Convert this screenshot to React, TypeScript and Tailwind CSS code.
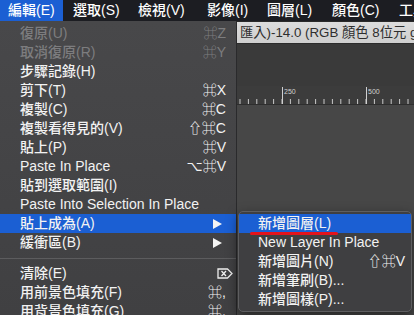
import React from 'react'

const FONT = "font-['Liberation_Sans','Noto_Sans_CJK_TC','DejaVu_Sans',sans-serif]";

interface Item {
  label: string;
  sc?: string;
  disabled?: boolean;
  arrow?: boolean;
  active?: boolean;
  del?: boolean;
}

const mainItems: (Item | 'sep')[] = [
  { label: '復原(U)', sc: '⌘Z', disabled: true },
  { label: '取消復原(R)', sc: '⌘Y', disabled: true },
  { label: '步驟記錄(H)' },
  { label: '剪下(T)', sc: '⌘X' },
  { label: '複製(C)', sc: '⌘C' },
  { label: '複製看得見的(V)', sc: '⇧⌘C' },
  { label: '貼上(P)', sc: '⌘V' },
  { label: 'Paste In Place', sc: '⌥⌘V' },
  { label: '貼到選取範圍(I)' },
  { label: 'Paste Into Selection In Place' },
  { label: '貼上成為(A)', arrow: true, active: true },
  { label: '緩衝區(B)', arrow: true },
  'sep',
  { label: '清除(E)', del: true },
  { label: '用前景色填充(F)', sc: '⌘,' },
  { label: '用背景色填充(G)', sc: '⌘.' },
];

const subItems: Item[] = [
  { label: '新增圖層(L)', active: true },
  { label: 'New Layer In Place' },
  { label: '新增圖片(N)', sc: '⇧⌘V' },
  { label: '新增筆刷(B)...' },
  { label: '新增圖樣(P)...' },
];

// menu bar titles with their slot widths
const menuBar = [
  { t: '編輯(E)', w: 'w-[63px] pl-2 bg-[#1b5fd3]' },
  { t: '選取(S)', w: 'w-[65px] pl-[10px]' },
  { t: '檢視(V)', w: 'w-[69px] pl-[10px]' },
  { t: '影像(I)', w: 'w-[60px] pl-[10px]' },
  { t: '圖層(L)', w: 'w-[65px] pl-[10px]' },
  { t: '顏色(C)', w: 'w-[67px] pl-[10px]' },
  { t: '工具(T)', w: 'w-[60px] pl-[10px]' },
];

const Arrow = () => (
  <svg width="9" height="10" viewBox="0 0 9 10">
    <path d="M0 0 L9 5 L0 10 Z" fill="#f4f4f4" />
  </svg>
);

const DeleteKey = () => (
  <svg width="16" height="11" viewBox="0 0 16 11" fill="none" stroke="#eeeeee" strokeWidth="1.3">
    <path d="M1 1 H10.5 L15 5.5 L10.5 10 H1 Z" />
    <path d="M4.5 3 L9 8 M9 3 L4.5 8" />
  </svg>
);

const Ruler = () => {
  const ticks: number[] = [];
  for (let x = 45 - 8.4 * 5; x < 180; x += 8.4) ticks.push(x);
  return (
    <svg width="177" height="19" viewBox="0 0 177 19" className="block">
      <rect width="177" height="19" fill="#3c3c3c" />
      {ticks.map((x, i) => (
        <line key={i} x1={x} x2={x} y1="13" y2="18" stroke="#c9c9c9" strokeWidth="1" />
      ))}
      <line x1="45.5" x2="45.5" y1="1" y2="18" stroke="#d0d0d0" strokeWidth="1" />
      <line x1="129.5" x2="129.5" y1="1" y2="18" stroke="#d0d0d0" strokeWidth="1" />
      <text x="47" y="8" fontSize="7" fill="#d0d0d0" fontFamily="Liberation Sans">250</text>
      <text x="131" y="8" fontSize="7" fill="#d0d0d0" fontFamily="Liberation Sans">500</text>
      <line x1="0" x2="177" y1="18.5" y2="18.5" stroke="#2e2e2e" />
    </svg>
  );
};

export default function App() {
  return (
    <div className={`relative w-[414px] h-[315px] overflow-hidden bg-[#474747] ${FONT}`}>
      {/* menu bar */}
      <div className="flex h-[21px] bg-[#1c1d22] text-[14px] font-medium text-white">
        {menuBar.map((m) => (
          <div key={m.t} className={`flex shrink-0 items-center whitespace-nowrap ${m.w}`}>
            {m.t}
          </div>
        ))}
      </div>

      <div className="flex h-[294px]">
        {/* main edit menu */}
        <div className="w-[237px] shrink-0 border-r border-[#2a2a2c] bg-gradient-to-b from-[#48484a] to-[#404042] pt-[3px] text-[14px] font-medium text-[#f2f2f2]">
          {mainItems.map((it, i) =>
            it === 'sep' ? (
              <div key={i} className="flex h-[12px] items-center">
                <div className="h-px w-full bg-[#5c5c5e]" />
              </div>
            ) : (
              <div
                key={i}
                className={`flex h-[19px] items-center justify-between pl-5 pr-[10px] whitespace-nowrap ${
                  it.active ? 'bg-[#1b5fd3]' : ''
                } ${it.disabled ? 'text-[#7d7d7f]' : ''}`}
              >
                <span>{it.label}</span>
                {it.sc && <span className="text-[14px]">{it.sc}</span>}
                {it.arrow && <span className="pr-[4px]"><Arrow /></span>}
                {it.del && <span className="-mr-[7px]"><DeleteKey /></span>}
              </div>
            )
          )}
        </div>

        {/* image window behind */}
        <div className="flex min-w-0 flex-1 flex-col">
          <div className="h-px bg-[#2a2a2a]" />
          <div className="flex h-[21px] items-center overflow-hidden whitespace-nowrap bg-gradient-to-b from-[#dcdcdc] to-[#cfcfcf] pl-[3px] text-[13.3px] text-[#2e2e2e]">
            匯入)-14.0 (RGB 顏色 8位元 gamma 整數, 灰階
          </div>
          <div className="h-[43px] bg-[#3a3a3a] border-t border-[#2c2c2c]" />
          <Ruler />
          <div className="flex-1 bg-[#474747]" />
        </div>
      </div>

      {/* submenu */}
      <div className="absolute left-[238px] top-[211px] w-[174px] rounded-[5px] border border-[#5e5e60] bg-[#3f3f41] py-[2px] text-[14px] font-medium text-[#f2f2f2] shadow-[0_4px_12px_rgba(0,0,0,0.5)]">
        {subItems.map((it, i) => (
          <div
            key={i}
            className={`relative flex h-[19px] items-center justify-between pl-[19px] pr-[6px] whitespace-nowrap ${
              it.active ? 'bg-[#1b5fd3]' : ''
            }`}
          >
            <span>{it.label}</span>
            {it.sc && <span>{it.sc}</span>}
            {it.active && (
              <div className="absolute left-[11px] top-[18px] h-[3px] w-[88px] rounded-full bg-[#e3131b]" />
            )}
          </div>
        ))}
      </div>
    </div>
  );
}
